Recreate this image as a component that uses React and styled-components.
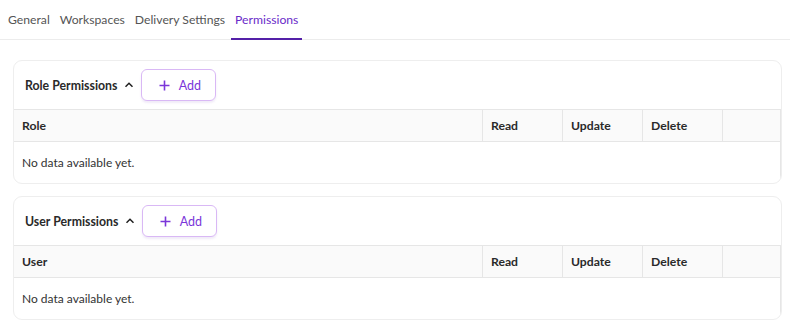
import React from "react";
import styled, { createGlobalStyle } from "styled-components";

const Global = createGlobalStyle`
  html, body { margin: 0; padding: 0; background: #fff; }
  body { font-family: Lato, "Noto Sans", sans-serif; color: #222; }
  * { box-sizing: border-box; }
`;

const Page = styled.div`
  width: 790px;
`;

const TabBar = styled.div`
  display: flex;
  height: 40px;
  padding-left: 4px;
  border-bottom: 1px solid #ececec;
  gap: 2px;
`;

const Tab = styled.div`
  display: flex;
  align-items: center;
  padding: 0 4px;
  font-size: 12.2px;
  color: ${(p) => (p.$active ? "#6a2bc9" : "#555")};
  border-bottom: 2px solid ${(p) => (p.$active ? "#5420a8" : "transparent")};
  margin-bottom: -1px;
  padding-top: 1px;
`;

const Content = styled.div`
  display: flex;
  flex-direction: column;
  gap: 12px;
  padding: 20px 8px 0 13px;
`;

const Card = styled.div`
  border: 1px solid #eeeeee;
  border-radius: 9px;
  overflow: hidden;
  background: #fff;
`;

const CardHeader = styled.div`
  display: flex;
  align-items: center;
  height: 48px;
  padding-left: 11px;
`;

const Title = styled.div`
  font-size: 12.3px;
  font-weight: 700;
  color: #2a2a2a;
`;

const Chevron = styled.span`
  display: inline-flex;
  margin-left: 7px;
  margin-right: 7px;
`;

const AddButton = styled.button`
  display: flex;
  align-items: center;
  justify-content: center;
  gap: 9px;
  width: 75px;
  height: 32px;
  border: 1px solid #d9b8f5;
  border-radius: 6px;
  background: #fff;
  box-shadow: 0 2px 2px rgba(160, 120, 210, 0.15);
  color: #7b36d9;
  font-family: Lato, sans-serif;
  font-size: 12.5px;
  padding: 0 0 0 2px;
`;

const Table = styled.div`
  border-top: 1px solid #e6e6e6;
`;

const Row = styled.div`
  display: grid;
  grid-template-columns: 468px 80px 80px 80px 1fr;
  height: ${(p) => (p.$head ? "32px" : "42px")};
  background: ${(p) => (p.$head ? "#fafafa" : "#fff")};
  border-bottom: ${(p) => (p.$head ? "1px solid #e6e6e6" : "none")};
`;

const HeadCell = styled.div`
  display: flex;
  align-items: center;
  padding-left: 8px;
  font-size: 12.2px;
  font-weight: 700;
  color: #2a2a2a;
  border-left: ${(p) => (p.$first ? "none" : "1px solid #e6e6e6")};
  border-right: ${(p) => (p.$last ? "1px solid #e6e6e6" : "none")};
`;

const EmptyRow = styled.div`
  display: flex;
  align-items: center;
  height: 41px;
  padding-left: 8px;
  font-size: 12px;
  color: #333;
  border-right: 1px solid #e6e6e6;
`;

const ChevronUp = () => (
  <svg width="10" height="10" viewBox="0 0 10 10">
    <path d="M1.5 6.8 L5 3.3 L8.5 6.8" fill="none" stroke="#222" strokeWidth="1.5" />
  </svg>
);

const Plus = () => (
  <svg width="11" height="11" viewBox="0 0 11 11">
    <path d="M5.5 0.5 V10.5 M0.5 5.5 H10.5" stroke="#7b36d9" strokeWidth="1.6" />
  </svg>
);

const PermissionCard = ({ title, first }) => (
  <Card>
    <CardHeader>
      <Title>{title}</Title>
      <Chevron>
        <ChevronUp />
      </Chevron>
      <AddButton>
        <Plus />
        Add
      </AddButton>
    </CardHeader>
    <Table>
      <Row $head>
        <HeadCell $first>{first}</HeadCell>
        <HeadCell>Read</HeadCell>
        <HeadCell>Update</HeadCell>
        <HeadCell>Delete</HeadCell>
        <HeadCell $last />
      </Row>
      <EmptyRow>No data available yet.</EmptyRow>
    </Table>
  </Card>
);

export default function App() {
  return (
    <Page>
      <Global />
      <TabBar>
        <Tab>General</Tab>
        <Tab>Workspaces</Tab>
        <Tab>Delivery Settings</Tab>
        <Tab $active>Permissions</Tab>
      </TabBar>
      <Content>
        <PermissionCard title="Role Permissions" first="Role" />
        <PermissionCard title="User Permissions" first="User" />
      </Content>
    </Page>
  );
}
